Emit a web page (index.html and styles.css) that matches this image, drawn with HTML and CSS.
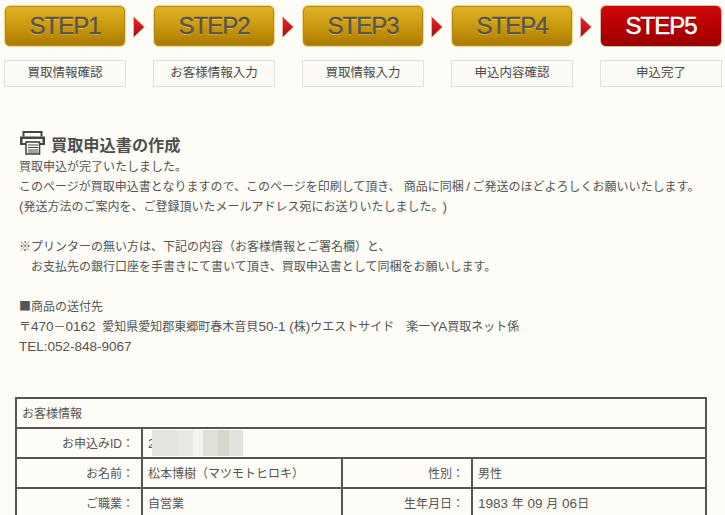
FILE: index.html
```html
<!DOCTYPE html>
<html lang="ja">
<head>
<meta charset="utf-8">
<title>買取申込書の作成</title>
<link rel="stylesheet" href="styles.css">
</head>
<body>
<div class="steps">
  <div class="step"><div class="badge">STEP1</div><div class="caption">買取情報確認</div></div>
  <svg class="arrow" viewBox="0 0 12 22"><defs><linearGradient id="ag" x1="0" y1="0" x2="0" y2="1"><stop offset="0" stop-color="#ea2a2a"/><stop offset="1" stop-color="#a50a10"/></linearGradient></defs><path d="M0.5 0.5L11.5 11L0.5 21.5Z" fill="url(#ag)" stroke="#f0c8b8" stroke-width="0.6"/></svg>
  <div class="step"><div class="badge">STEP2</div><div class="caption">お客様情報入力</div></div>
  <svg class="arrow" viewBox="0 0 12 22"><path d="M0.5 0.5L11.5 11L0.5 21.5Z" fill="url(#ag)" stroke="#f0c8b8" stroke-width="0.6"/></svg>
  <div class="step"><div class="badge">STEP3</div><div class="caption">買取情報入力</div></div>
  <svg class="arrow" viewBox="0 0 12 22"><path d="M0.5 0.5L11.5 11L0.5 21.5Z" fill="url(#ag)" stroke="#f0c8b8" stroke-width="0.6"/></svg>
  <div class="step"><div class="badge">STEP4</div><div class="caption">申込内容確認</div></div>
  <svg class="arrow" viewBox="0 0 12 22"><path d="M0.5 0.5L11.5 11L0.5 21.5Z" fill="url(#ag)" stroke="#f0c8b8" stroke-width="0.6"/></svg>
  <div class="step"><div class="badge current">STEP5</div><div class="caption">申込完了</div></div>
</div>

<h1 class="title">
  <svg class="printer" viewBox="0 0 25 24" fill="none" stroke="#454545">
    <path d="M3.5 5.5V1H21.5V5.5" stroke-width="2"/>
    <path d="M0 5.5H25V14H0Z" fill="#454545" stroke="none"/>
    <path d="M2.5 8H22.5V12H2.5Z" fill="#fdfcf6" stroke="none"/>
    <rect x="6" y="11" width="13.5" height="12" fill="#fdfcf6" stroke-width="1.6"/>
    <path d="M8 14H18M8 16.5H18M8 19H18M8 21H18" stroke-width="1.1"/>
  </svg>
  <span>買取申込書の作成</span>
</h1>

<div class="message">
  <p>買取申込が完了いたしました。</p>
  <p>このページが買取申込書となりますので、このページを印刷して頂き、 商品に同梱<span class="l slash">/</span>ご発送のほどよろしくお願いいたします。</p>
  <p><span class="l">(</span>発送方法のご案内を、ご登録頂いたメールアドレス宛にお送りいたしました。<span class="l close">)</span></p>
  <p class="blank">&nbsp;</p>
  <p>※プリンターの無い方は、下記の内容（お客様情報とご署名欄）と、</p>
  <p>　お支払先の銀行口座を手書きにて書いて頂き、買取申込書として同梱をお願いします。</p>
  <p class="blank">&nbsp;</p>
  <p><span class="cjk">■</span>商品の送付先</p>
  <p>〒<span class="l">470</span>－<span class="l gap">0162 </span>愛知県愛知郡東郷町春木音貝<span class="l">50-1 (</span>株<span class="l">)</span>ウエストサイド　楽一<span class="l">YA</span>買取ネット係</p>
  <p class="l">TEL:052-848-9067</p>
</div>

<table class="info">
  <colgroup><col class="c1"><col class="c2"><col class="c3"><col class="c4"></colgroup>
  <tr><th colspan="4" class="head">お客様情報</th></tr>
  <tr><th>お申込みID：</th><td colspan="3" class="idcell"><span class="l">2</span><span class="mosaic"><i class="m1"></i><i class="m2"></i><i class="m3"></i><i class="m4"></i><i class="m5"></i><i class="m6"></i></span></td></tr>
  <tr><th>お名前：</th><td>松本博樹（マツモトヒロキ）</td><th>性別：</th><td>男性</td></tr>
  <tr><th>ご職業：</th><td>自営業</td><th>生年月日：</th><td><span class="l">1983 </span>年<span class="l"> 09 </span>月<span class="l"> 06</span>日</td></tr>
</table>
</body>
</html>
```
FILE: styles.css
```css
html, body { margin: 0; padding: 0; height: 515px; overflow: hidden; }
body {
  background: #fdfcf6;
  color: #555;
  font-family: "Liberation Sans", "Noto Sans CJK JP", sans-serif;
  font-size: 12px;
  line-height: 20px;
}
.l { font-size: 13.5px; }
.slash { margin: 0 2.5px; }
.close { margin-left: 5px; }
.gap { margin-right: 3px; }
.cjk { font-family: "Noto Sans CJK JP", sans-serif; line-height: 1; }
.steps {
  display: flex;
  align-items: flex-start;
  padding: 5px 0 0 4px;
}
.step { width: 122px; flex: none; }
.badge {
  box-sizing: border-box;
  height: 42px;
  border: 1px solid #efd890;
  border-radius: 6px;
  background: linear-gradient(#e0b225 0%, #d2a216 35%, #bb8905 75%, #a87800 100%);
  box-shadow: inset 0 0 0 1px #b58a10;
  color: #5a5448;
  font-size: 24px;
  letter-spacing: -1px;
  line-height: 39px;
  text-align: center;
  -webkit-text-stroke: 0.4px #5a5448;
  text-shadow: 0 1px 0 #e3bd4e;
}
.badge.current {
  border-color: #c8c0b0;
  background: linear-gradient(#d00a0a 0%, #b80000 50%, #9a0000 100%);
  box-shadow: none;
  color: #fff;
  -webkit-text-stroke: 0.5px #fff;
  text-shadow: 0 1px 1px #600;
}
.caption {
  box-sizing: border-box;
  height: 27px;
  margin-top: 13px;
  border: 1px solid #e2e0da;
  background: #fbfaf5;
  color: #4c4c4c;
  font-size: 12.5px;
  line-height: 25px;
  text-align: center;
}
.arrow { flex: none; width: 12px; height: 22px; margin: 11px 8px 0 7px; }
.title {
  display: flex;
  align-items: flex-start;
  gap: 6px;
  margin: 44px 0 0 20px;
  height: 26px;
  color: #4f4f4f;
  font-size: 16.2px;
  font-weight: bold;
  line-height: 26px;
}
.title span { padding-top: 1px; }
.printer { width: 25px; height: 24px; flex: none; }
.message { margin: 0 0 0 19px; }
.message p { margin: 0; height: 20px; white-space: nowrap; }
.info {
  border-collapse: collapse;
  table-layout: fixed;
  width: 690px;
  margin: 40px 0 0 15px;
  background: transparent;
}
.c1 { width: 126px; }
.c2 { width: 200px; }
.c3 { width: 130px; }
.c4 { width: 234px; }
.info th, .info td {
  box-sizing: border-box;
  height: 30px;
  border: 2px solid #555;
  padding: 1px 5px 0;
  font-size: 12px;
  font-weight: normal;
  line-height: 20px;
}
.info th { text-align: right; padding-right: 7px; }
.info td { padding-left: 5px; }
.info th.head { text-align: left; }
.idcell { position: relative; }
.mosaic {
  position: absolute;
  left: 9px;
  top: 1px;
  width: 91px;
  height: 26px;
  display: flex;
  background: #e6e5e0;
}
.mosaic i { display: block; height: 100%; }
.m1 { width: 25px; background: #e4e3de; }
.m2 { width: 16px; background: #e9e8e3; }
.m3 { width: 10px; background: #f3f2ee; }
.m4 { width: 15px; background: #e0dfd8; }
.m5 { width: 11px; background: #d8d6cc; }
.m6 { width: 14px; background: #e3e2dd; }
```
